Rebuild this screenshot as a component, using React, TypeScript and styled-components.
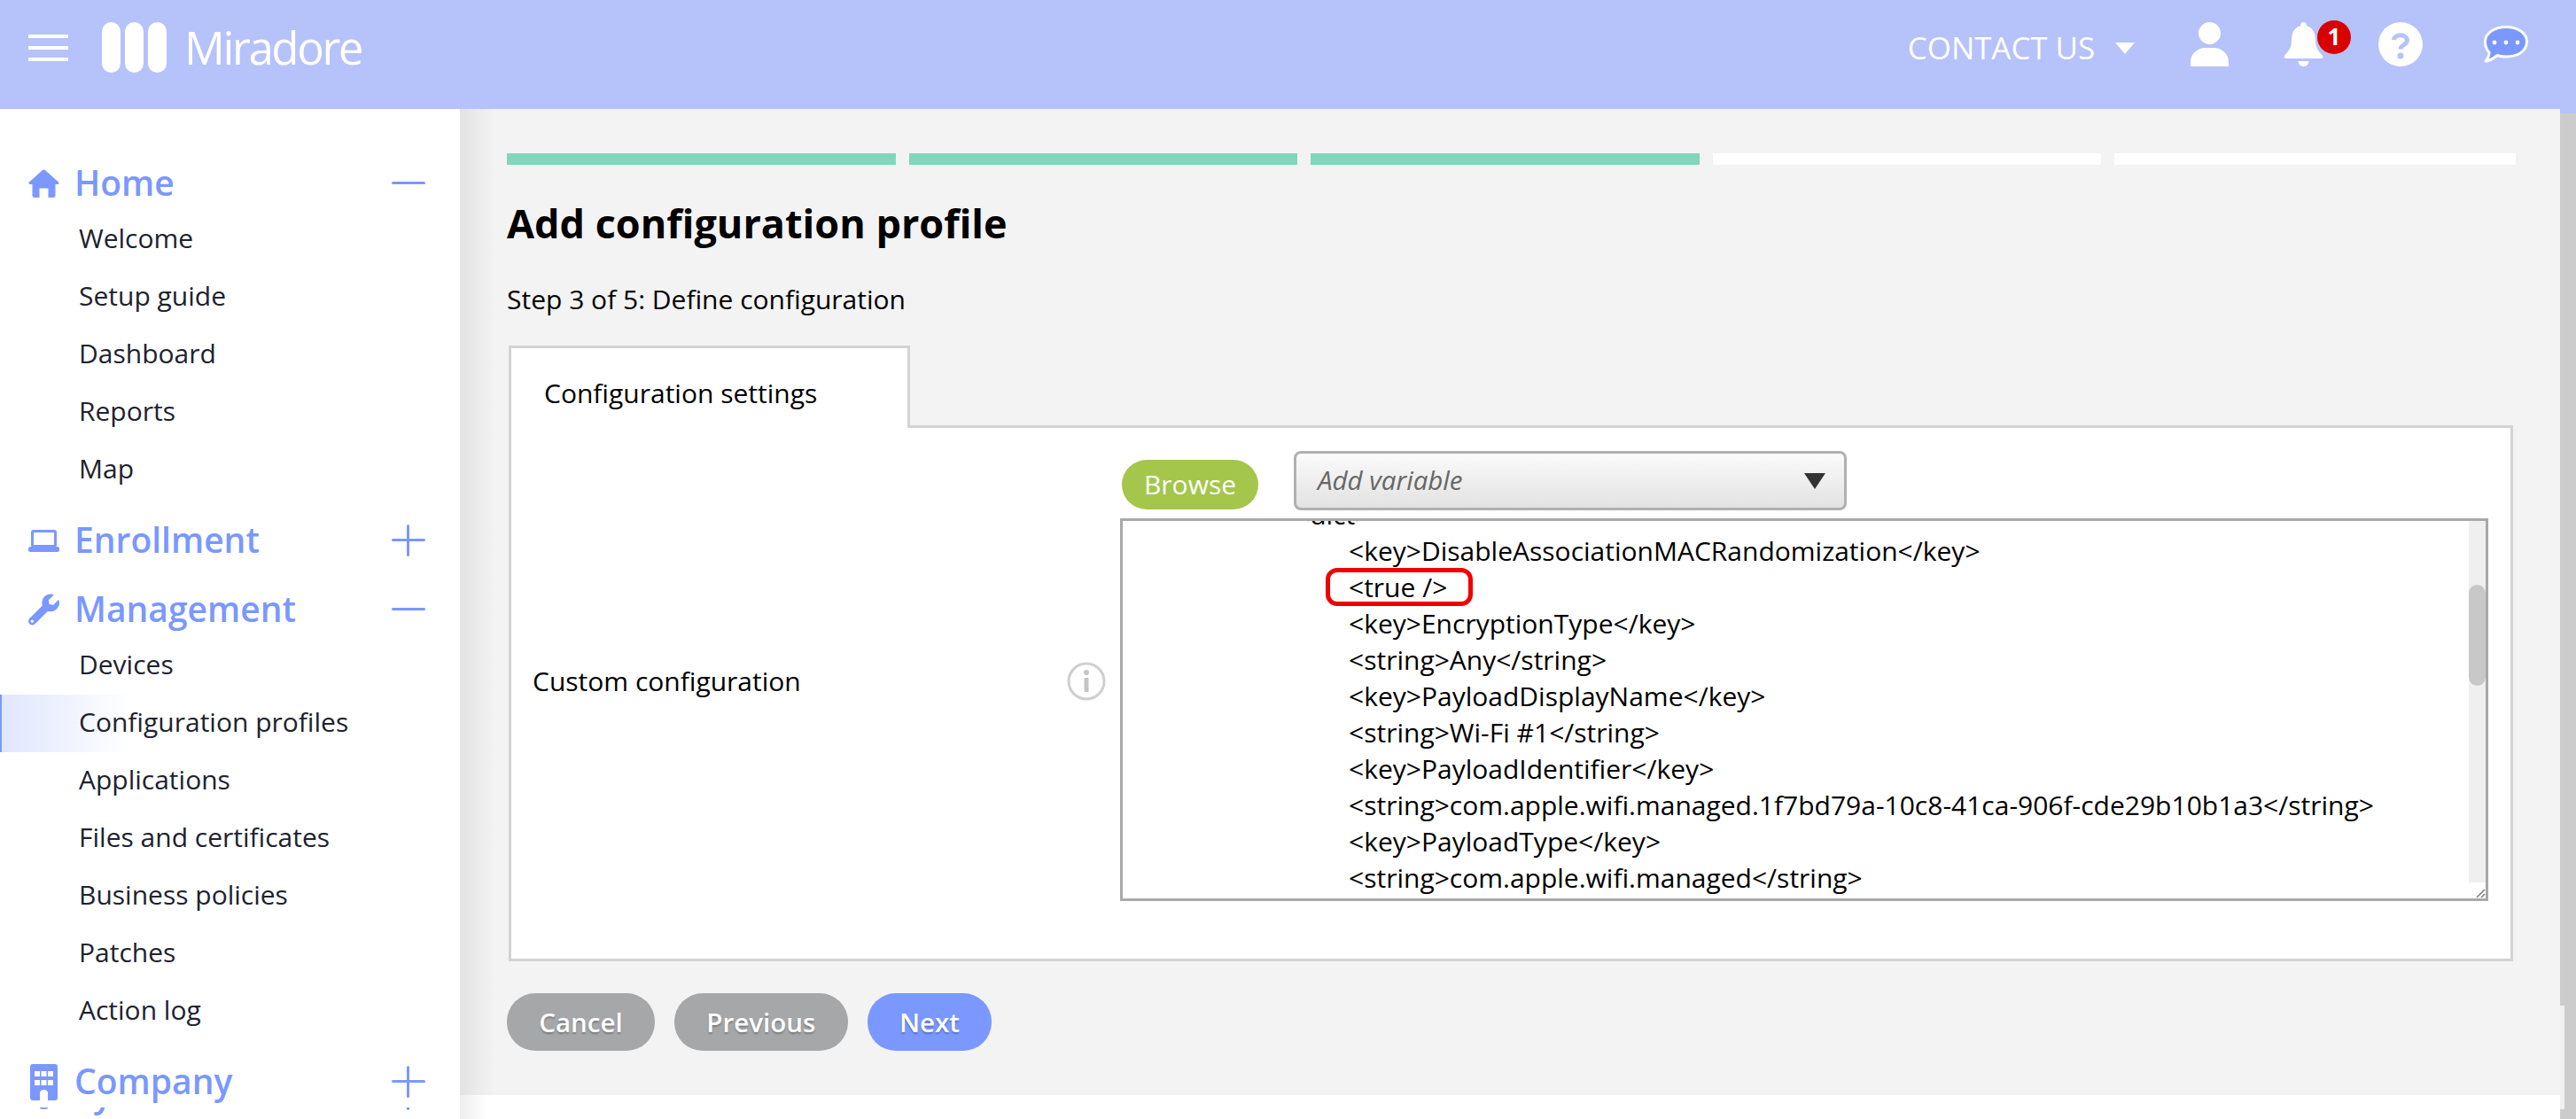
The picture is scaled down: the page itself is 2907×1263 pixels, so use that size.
import React from "react";
import styled, { createGlobalStyle } from "styled-components";
import { FaCog, FaWrench } from "react-icons/fa";

const BLUE = "#7a98ff";
const HEADER = "#b6c2fa";

const GlobalStyle = createGlobalStyle`
  html, body {
    margin: 0;
    padding: 0;
    overflow: hidden;
  }
  body {
    font-family: "Open Sans", "Noto Sans", sans-serif;
    color: #000;
  }
  * {
    box-sizing: border-box;
  }
`;

const menu = [
  {
    title: "Home",
    icon: <HomeIcon />,
    open: true,
    items: ["Welcome", "Setup guide", "Dashboard", "Reports", "Map"],
  },
  { title: "Enrollment", icon: <LaptopIcon />, open: false, items: [] },
  {
    title: "Management",
    icon: <FaWrench size={36} />,
    open: true,
    items: [
      "Devices",
      "Configuration profiles",
      "Applications",
      "Files and certificates",
      "Business policies",
      "Patches",
      "Action log",
    ],
  },
  { title: "Company", icon: <BuildingIcon />, open: false, items: [] },
];

const codeLines = [
  { text: "<dict>", indent: 194 },
  { text: "<key>DisableAssociationMACRandomization</key>", indent: 255 },
  { text: "<true />", indent: 255, marked: true },
  { text: "<key>EncryptionType</key>", indent: 255 },
  { text: "<string>Any</string>", indent: 255 },
  { text: "<key>PayloadDisplayName</key>", indent: 255 },
  { text: "<string>Wi-Fi #1</string>", indent: 255 },
  { text: "<key>PayloadIdentifier</key>", indent: 255 },
  {
    text: "<string>com.apple.wifi.managed.1f7bd79a-10c8-41ca-906f-cde29b10b1a3</string>",
    indent: 255,
  },
  { text: "<key>PayloadType</key>", indent: 255 },
  { text: "<string>com.apple.wifi.managed</string>", indent: 255 },
];

function HomeIcon() {
  return (
    <svg width="35" height="32" viewBox="0 0 35 32" fill="currentColor">
      <path d="M15.8 1.2 Q17.5 -0.2 19.2 1.2 L34 14.5 Q35.6 16.6 33 17 H30.5 V29.5 Q30.5 32 28 32 H22.5 V21.5 H12.5 V32 H7 Q4.5 32 4.5 29.5 V17 H2 Q-0.6 16.6 1 14.5 Z" />
    </svg>
  );
}

function LaptopIcon() {
  return (
    <svg width="35" height="25" viewBox="0 0 35 25" fill="currentColor">
      <rect x="4.5" y="1.5" width="26" height="17" rx="1.5" fill="none" stroke="currentColor" strokeWidth="3" />
      <rect x="0" y="19" width="35" height="6" rx="2.5" />
    </svg>
  );
}

function BuildingIcon() {
  return (
    <svg width="31" height="41" viewBox="0 0 31 41" fill="currentColor">
      <path
        fillRule="evenodd"
        d="M3 0 H28 Q31 0 31 3 V38 Q31 41 28 41 H20 V33 Q20 29 15.5 29 Q11 29 11 33 V41 H3 Q0 41 0 38 V3 Q0 0 3 0 Z M5 8 V14 H11 V8 Z M12.5 8 V14 H18.5 V8 Z M20 8 V14 H26 V8 Z M5 18 V24 H11 V18 Z M12.5 18 V24 H18.5 V18 Z M20 18 V24 H26 V18 Z"
      />
    </svg>
  );
}

function Logo() {
  return (
    <svg width="73" height="57" viewBox="0 0 73 57" fill="#fff">
      <rect x="0" y="0" width="21" height="57" rx="10.5" />
      <rect x="26" y="0" width="21" height="57" rx="10.5" />
      <rect x="52" y="0" width="21" height="57" rx="10.5" />
    </svg>
  );
}

function UserIcon() {
  return (
    <svg width="43" height="50" viewBox="0 0 43 50" fill="#fff">
      <circle cx="21.5" cy="12.5" r="12.5" />
      <path d="M0 50 V45 C0 35 9 29 16 29 H27 C34 29 43 35 43 45 V50 Z" />
    </svg>
  );
}

function BellIcon() {
  return (
    <svg width="45" height="50" viewBox="0 0 45 50" fill="#fff">
      <circle cx="22.5" cy="3.5" r="3.5" />
      <path d="M22.5 4 C13 4 9 11 9 20 C9 29 6 32 1 38 Q-0.5 41 3 41 H42 Q45.5 41 44 38 C39 32 36 29 36 20 C36 11 32 4 22.5 4 Z" />
      <path d="M16.5 44 H28.5 A6 6 0 0 1 16.5 44 Z" />
    </svg>
  );
}

function HelpIcon() {
  return (
    <svg width="50" height="50" viewBox="0 0 50 50">
      <circle cx="25" cy="25" r="25" fill="#fff" />
      <path d="M17.5 20 C18 13 32 13 32.5 20.5 C32.5 25.5 25 25.5 25 30.5" fill="none" stroke={HEADER} strokeWidth="5" />
      <circle cx="25" cy="38" r="3.5" fill={HEADER} />
    </svg>
  );
}

function ChatIcon() {
  return (
    <svg width="50" height="42" viewBox="0 0 50 42">
      <path
        d="M25 1.5 C38 1.5 48.5 8 48.5 18 C48.5 29 38 35 25 35 C21 35 18 34.5 15 33.5 C11 37 7 39.5 2 40 C5 36.5 6.5 34 6 30 C3 27 1.5 23 1.5 18 C1.5 8 12 1.5 25 1.5 Z"
        fill={BLUE}
        stroke="#fff"
        strokeWidth="3"
        strokeLinejoin="round"
      />
      <circle cx="12" cy="19" r="2.4" fill="#fff" />
      <circle cx="25" cy="19" r="2.4" fill="#fff" />
      <circle cx="38" cy="19" r="2.4" fill="#fff" />
    </svg>
  );
}

function InfoIcon() {
  return (
    <svg width="44" height="44" viewBox="0 0 44 44">
      <circle cx="22" cy="22" r="20" fill="#fff" stroke="#cfcfcf" strokeWidth="3" />
      <circle cx="22" cy="12" r="3" fill="#c4c4c4" />
      <rect x="19.5" y="18" width="5" height="16" rx="1" fill="#c4c4c4" />
    </svg>
  );
}

function SideMenu() {
  return (
    <Sidebar>
      {menu.map((section, idx) => (
        <Section key={section.title} first={idx === 0}>
          <SectionHead>
            <SectionIcon>{section.icon}</SectionIcon>
            <SectionTitle>{section.title}</SectionTitle>
            <Toggle open={section.open} />
          </SectionHead>
          {section.items.map((item) => (
            <SubItem key={item} active={item === "Configuration profiles"}>
              {item}
            </SubItem>
          ))}
        </Section>
      ))}
      <ClippedSection>
        <SectionHead>
          <SectionIcon>
            <FaCog size={36} />
          </SectionIcon>
          <SectionTitle>System</SectionTitle>
          <Toggle open={false} />
        </SectionHead>
      </ClippedSection>
    </Sidebar>
  );
}

export default function App() {
  return (
    <Page>
      <GlobalStyle />
      <Header>
        <Hamburger>
          <span />
          <span />
          <span />
        </Hamburger>
        <LogoBox>
          <Logo />
        </LogoBox>
        <Brand>Miradore</Brand>
        <Contact>CONTACT US</Contact>
        <Caret />
        <HeadIcon gap={63}>
          <UserIcon />
        </HeadIcon>
        <HeadIcon gap={62}>
          <BellIcon />
          <Badge>1</Badge>
        </HeadIcon>
        <HeadIcon gap={62}>
          <HelpIcon />
        </HeadIcon>
        <HeadIcon gap={69}>
          <ChatIcon />
        </HeadIcon>
      </Header>
      <Body>
        <SideMenu />
        <Main>
          <Content>
            <Steps>
              {[1, 2, 3, 4, 5].map((n) => (
                <StepBar key={n} done={n <= 3} />
              ))}
            </Steps>
            <Title>Add configuration profile</Title>
            <StepText>Step 3 of 5: Define configuration</StepText>
            <Tab>Configuration settings</Tab>
            <Panel>
              <LabelCell>
                <FieldLabel>Custom configuration</FieldLabel>
                <InfoIcon />
              </LabelCell>
              <div>
                <Controls>
                  <BrowseButton>Browse</BrowseButton>
                  <VariableSelect>
                    <span>Add variable</span>
                    <SelectArrow />
                  </VariableSelect>
                </Controls>
                <CodeBox>
                  <CodeArea>
                    {codeLines.map((line, idx) => (
                      <CodeLine key={idx} indent={line.indent}>
                        {line.marked ? <Marked>{line.text}</Marked> : line.text}
                      </CodeLine>
                    ))}
                  </CodeArea>
                  <CodeScroll>
                    <CodeTrack>
                      <CodeThumb />
                    </CodeTrack>
                    <Grip>
                      <svg width="12" height="12" viewBox="0 0 12 12" stroke="#777" strokeWidth="1.5">
                        <line x1="2" y1="11" x2="11" y2="2" />
                        <line x1="7" y1="11" x2="11" y2="7" />
                      </svg>
                    </Grip>
                  </CodeScroll>
                </CodeBox>
              </div>
            </Panel>
            <Actions>
              <ActionButton>Cancel</ActionButton>
              <ActionButton>Previous</ActionButton>
              <ActionButton primary>Next</ActionButton>
            </Actions>
          </Content>
          <Footer />
        </Main>
        <PageScroll>
          <PageScrollStrip />
        </PageScroll>
      </Body>
    </Page>
  );
}

const Page = styled.div`
  width: 100vw;
  height: 100vh;
  display: flex;
  flex-direction: column;
  overflow: hidden;
`;

const Header = styled.header`
  height: 123px;
  flex: none;
  display: flex;
  align-items: center;
  padding: 0 54px 16px 32px;
  background: ${HEADER};
  color: #fff;
`;

const Hamburger = styled.div`
  width: 45px;
  height: 30px;
  display: flex;
  flex-direction: column;
  justify-content: space-between;

  span {
    height: 4px;
    background: #fff;
  }
`;

const LogoBox = styled.div`
  display: flex;
  margin-left: 38px;
`;

const Brand = styled.div`
  margin-left: 20px;
  font-size: 51px;
  font-weight: 400;
  line-height: 1;
  letter-spacing: -2.4px;
`;

const Contact = styled.div`
  margin-left: auto;
  font-size: 35px;
  line-height: 1;
  letter-spacing: -0.1px;
`;

const Caret = styled.div`
  margin-left: 23px;
  margin-top: 2px;
  width: 0;
  height: 0;
  border-left: 11px solid transparent;
  border-right: 11px solid transparent;
  border-top: 13px solid #fff;
`;

const HeadIcon = styled.div<{ gap: number }>`
  position: relative;
  display: flex;
  margin-left: ${(props) => props.gap}px;
  margin-bottom: 7px;
`;

const Badge = styled.div`
  position: absolute;
  top: -2px;
  left: 38px;
  width: 38px;
  height: 38px;
  border-radius: 50%;
  background: #d80000;
  color: #fff;
  font-size: 26px;
  font-weight: 700;
  line-height: 36px;
  text-align: center;
`;

const Body = styled.div`
  flex: 1;
  min-height: 0;
  display: flex;
  background: ${HEADER};
`;

const Sidebar = styled.nav`
  width: 519px;
  flex: none;
  padding-top: 53px;
  background: #fff;
  overflow: hidden;
`;

const Section = styled.section<{ first?: boolean }>`
  margin-top: ${(props) => (props.first ? 0 : 16)}px;
`;

const SectionHead = styled.div`
  height: 62px;
  display: flex;
  align-items: center;
  padding: 0 39px 0 32px;
  color: ${BLUE};
`;

const SectionIcon = styled.div`
  width: 35px;
  flex: none;
  display: flex;
  justify-content: center;
`;

const SectionTitle = styled.div`
  margin-left: 17px;
  padding-bottom: 4px;
  font-size: 39px;
  font-weight: 600;
  line-height: 1;
`;

const Toggle = styled.div<{ open: boolean }>`
  position: relative;
  width: 38px;
  height: 36px;
  margin-left: auto;

  &::before {
    content: "";
    position: absolute;
    left: 0;
    right: 0;
    top: 16px;
    height: 3px;
    border-radius: 2px;
    background: ${BLUE};
  }

  &::after {
    content: "";
    display: ${(props) => (props.open ? "none" : "block")};
    position: absolute;
    top: 0;
    bottom: 0;
    left: 17px;
    width: 3px;
    border-radius: 2px;
    background: ${BLUE};
  }
`;

const SubItem = styled.div<{ active?: boolean }>`
  height: 65px;
  display: flex;
  align-items: center;
  padding-bottom: 4px;
  padding-left: ${(props) => (props.active ? 87 : 89)}px;
  border-left: ${(props) => (props.active ? `2px solid ${BLUE}` : "none")};
  background: ${(props) =>
    props.active ? "linear-gradient(90deg, #dfe6ff, #fff) no-repeat 0 0 / 144px 100%" : "none"};
  font-size: 30px;
  color: #20222e;
`;

const ClippedSection = styled.div`
  height: 11px;
  margin-top: -2px;
  overflow: hidden;

  & > div {
    margin-top: -46px;
  }
`;

const Main = styled.main`
  flex: 1;
  min-width: 0;
  display: flex;
  flex-direction: column;
`;

const Content = styled.div`
  height: 1113px;
  flex: none;
  padding: 50px 50px 0 53px;
  background: linear-gradient(90deg, #e3e3e3, #f3f3f3 40px);
`;

const Footer = styled.div`
  flex: 1;
  background: linear-gradient(90deg, #eeeeee, #fff 30px);
`;

const Steps = styled.div`
  display: grid;
  grid-template-columns: repeat(4, 438.5px) 1fr;
  gap: 15px;
`;

const StepBar = styled.div<{ done: boolean }>`
  height: 13px;
  background: ${(props) => (props.done ? "#82d6bc" : "#fff")};
`;

const Title = styled.h1`
  margin: 36px 0 0;
  font-size: 45px;
  font-weight: 700;
  line-height: 60px;
`;

const StepText = styled.div`
  margin-top: 35px;
  font-size: 30px;
  line-height: 41px;
`;

const Tab = styled.div`
  position: relative;
  z-index: 1;
  width: 453px;
  height: 93px;
  margin: 32px 0 -3px 2px;
  padding: 30px 0 0 37px;
  border: 3px solid #d3d3d3;
  border-bottom: none;
  background: #fff;
  font-size: 30px;
  line-height: 41px;
`;

const Panel = styled.div`
  width: 2262px;
  height: 605px;
  margin-left: 2px;
  padding: 26px 0 64px;
  border: 3px solid #d3d3d3;
  background: #fff;
  display: grid;
  grid-template-columns: 687px 1544px;
`;

const LabelCell = styled.div`
  display: flex;
  align-items: center;
  justify-content: space-between;
  padding: 10px 16px 0 24px;
`;

const FieldLabel = styled.div`
  font-size: 30px;
`;

const Controls = styled.div`
  display: flex;
  align-items: center;
  height: 67px;
  margin-bottom: 9px;
`;

const BrowseButton = styled.button`
  width: 154px;
  height: 56px;
  margin: 8px 40px 0 2px;
  padding: 0;
  border: none;
  border-radius: 28px;
  background: #a4c64b;
  color: #fff;
  font-family: inherit;
  font-size: 30px;
`;

const VariableSelect = styled.div`
  width: 624px;
  height: 67px;
  display: flex;
  align-items: center;
  justify-content: space-between;
  padding: 0 21px 2px 24px;
  border: 3px solid #b0b0b0;
  border-radius: 8px;
  background: linear-gradient(#fbfbfb, #e2e2e2);
  color: #666;
  font-size: 29.5px;
  font-style: italic;
`;

const SelectArrow = styled.div`
  width: 0;
  height: 0;
  margin-top: 2px;
  border-left: 12px solid transparent;
  border-right: 12px solid transparent;
  border-top: 18px solid #333;
`;

const CodeBox = styled.div`
  height: 432px;
  display: flex;
  border: 3px solid #a9a9a9;
  overflow: hidden;
`;

const CodeArea = styled.div`
  flex: 1;
  min-width: 0;
  overflow: hidden;
`;

const CodeLine = styled.div<{ indent: number }>`
  height: 41px;
  padding-left: ${(props) => props.indent}px;
  font-size: 30px;
  line-height: 41px;
  white-space: pre;

  &:first-child {
    margin-top: -28px;
  }
`;

const Marked = styled.span`
  position: relative;

  &::after {
    content: "";
    position: absolute;
    left: -26px;
    right: -29px;
    top: -1px;
    bottom: -1px;
    border: 5px solid #f00000;
    border-radius: 13px;
  }
`;

const CodeScroll = styled.div`
  width: 19px;
  flex: none;
  display: flex;
  flex-direction: column;
`;

const CodeTrack = styled.div`
  flex: 1;
  padding-top: 72px;
  background: #efefef;
`;

const CodeThumb = styled.div`
  height: 114px;
  border-radius: 10px;
  background: #c8c8c8;
`;

const Grip = styled.div`
  height: 18px;
  display: flex;
  align-items: flex-end;
  justify-content: flex-end;
  background: #fff;
`;

const Actions = styled.div`
  display: flex;
  margin-top: 36px;
  gap: 22px;
`;

const ActionButton = styled.button<{ primary?: boolean }>`
  height: 65px;
  padding: 0 36.3px;
  border: none;
  border-radius: 32px;
  background: ${(props) => (props.primary ? BLUE : "#a6a7a9")};
  color: #fff;
  font-family: inherit;
  font-size: 29.5px;
  font-weight: 600;
  text-shadow: 0 2px 2px rgba(0, 0, 0, 0.25);
`;

const PageScroll = styled.div`
  width: 18px;
  flex: none;
  margin-top: 5px;
  padding-top: 1007px;
  background: #cccccc;
`;

const PageScrollStrip = styled.div`
  width: 5px;
  height: 117px;
  background: #f0f0f0;
`;
